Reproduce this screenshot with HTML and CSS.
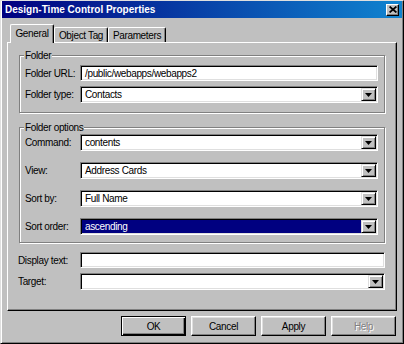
FILE: index.html
```html
<!DOCTYPE html>
<html>
<head>
<meta charset="utf-8">
<link rel="stylesheet" href="styles.css">
</head>
<body>
<div class="window">
  <div class="titlebar">
    <span class="title">Design-Time Control Properties</span>
    <span class="close"><svg width="8" height="7" viewBox="0 0 8 7"><path d="M0.6 0.5 L7.4 6.5 M7.4 0.5 L0.6 6.5" stroke="#000" stroke-width="1.7" fill="none"/></svg></span>
  </div>
  <div class="client">
    <div class="tabs">
      <div class="tab active tab-general">General</div>
      <div class="tab tab-object">Object Tag</div>
      <div class="tab tab-params">Parameters</div>
    </div>
    <div class="panel">
      <div class="group group-folder">
        <span class="legend">Folder</span>
        <div class="row">
          <span class="lbl">Folder URL:</span>
          <div class="field text">/public/webapps/webapps2</div>
        </div>
        <div class="row">
          <span class="lbl">Folder type:</span>
          <div class="field combo"><span class="value">Contacts</span><span class="drop"><svg width="7" height="4" viewBox="0 0 7 4"><path d="M0 0 H7 L3.5 4 Z" fill="#000"/></svg></span></div>
        </div>
      </div>
      <div class="group group-options">
        <span class="legend">Folder options</span>
        <div class="row">
          <span class="lbl">Command:</span>
          <div class="field combo"><span class="value">contents</span><span class="drop"><svg width="7" height="4" viewBox="0 0 7 4"><path d="M0 0 H7 L3.5 4 Z" fill="#000"/></svg></span></div>
        </div>
        <div class="row">
          <span class="lbl">View:</span>
          <div class="field combo"><span class="value">Address Cards</span><span class="drop"><svg width="7" height="4" viewBox="0 0 7 4"><path d="M0 0 H7 L3.5 4 Z" fill="#000"/></svg></span></div>
        </div>
        <div class="row">
          <span class="lbl">Sort by:</span>
          <div class="field combo"><span class="value">Full Name</span><span class="drop"><svg width="7" height="4" viewBox="0 0 7 4"><path d="M0 0 H7 L3.5 4 Z" fill="#000"/></svg></span></div>
        </div>
        <div class="row">
          <span class="lbl">Sort order:</span>
          <div class="field combo"><span class="value selected">ascending</span><span class="drop"><svg width="7" height="4" viewBox="0 0 7 4"><path d="M0 0 H7 L3.5 4 Z" fill="#000"/></svg></span></div>
        </div>
      </div>
      <div class="extra">
        <div class="row">
          <span class="lbl lbl-wide">Display text:</span>
          <div class="field text"></div>
        </div>
        <div class="row">
          <span class="lbl lbl-wide">Target:</span>
          <div class="field combo"><span class="value"></span><span class="drop"><svg width="7" height="4" viewBox="0 0 7 4"><path d="M0 0 H7 L3.5 4 Z" fill="#000"/></svg></span></div>
        </div>
      </div>
    </div>
    <div class="buttons">
      <div class="btn default">OK</div>
      <div class="btn">Cancel</div>
      <div class="btn">Apply</div>
      <div class="btn disabled">Help</div>
    </div>
  </div>
</div>
</body>
</html>
```

FILE: styles.css
```css
* { box-sizing: border-box; }
html, body { margin: 0; padding: 0; }
body {
  width: 404px;
  height: 344px;
  overflow: hidden;
  font-family: "Liberation Sans", Arial, sans-serif;
  font-size: 10px;
  letter-spacing: -0.35px;
  color: #000;
  background: #c0c0c0;
}
.window {
  width: 404px;
  height: 344px;
  background: #c0c0c0;
  border: 1px solid;
  border-color: #dfdfdf #000 #000 #dfdfdf;
  padding: 0 1px 1px 1px;
  box-shadow: inset 1px 0 #fff, inset -1px -1px #808080;
  display: flex;
  flex-direction: column;
}
.titlebar {
  height: 17px;
  flex: none;
  display: flex;
  align-items: center;
  justify-content: space-between;
  padding: 0 3px 0 3px;
  background: linear-gradient(to right, #000080, #1084d0);
}
.title {
  color: #fff;
  font-weight: bold;
  font-size: 10px;
  letter-spacing: 0;
}
.close {
  width: 13px;
  height: 12px;
  background: #c0c0c0;
  border: 1px solid;
  border-color: #fff #000 #000 #fff;
  box-shadow: inset -1px -1px #808080;
  display: flex;
  align-items: center;
  justify-content: center;
}
.close svg { display: block; }
.client {
  flex: 1;
  padding: 6px 5px 0 5px;
  display: flex;
  flex-direction: column;
}
.tabs {
  height: 18px;
  flex: none;
  display: flex;
  align-items: flex-end;
  padding-left: 3px;
  position: relative;
  z-index: 1;
}
.tab {
  height: 15px;
  background: #c0c0c0;
  border: 1px solid;
  border-bottom: none;
  border-color: #fff #000 #000 #fff;
  box-shadow: inset -1px 0 #808080;
  border-radius: 2px 2px 0 0;
  display: flex;
  align-items: center;
  justify-content: center;
  padding-top: 1px;
}
.tab.active {
  height: 19px;
  margin-bottom: -1px;
  padding-top: 0;
  padding-bottom: 1px;
}
.tab-general { width: 44px; }
.tab-object { width: 54px; }
.tab-params { width: 58px; }
.panel {
  height: 269px;
  flex: none;
  border: 1px solid;
  border-color: #fff #000 #000 #fff;
  box-shadow: inset -1px -1px #808080;
  padding: 12px 11px 0 11px;
  display: flex;
  flex-direction: column;
}
.group {
  position: relative;
  border: 1px solid #808080;
  box-shadow: 1px 1px #fff, inset 1px 1px #fff;
  display: flex;
  flex-direction: column;
}
.legend {
  position: absolute;
  top: -6px;
  left: 4px;
  background: #c0c0c0;
  padding: 0 1px;
  line-height: 12px;
}
.group-folder {
  padding: 9px 6px 9px 5px;
  gap: 5px;
}
.group-options {
  margin-top: 14px;
  padding: 6px 6px 7px 5px;
  gap: 11px;
}
.row {
  display: flex;
  align-items: center;
}
.lbl {
  width: 55px;
  flex: none;
  white-space: nowrap;
}
.lbl-wide {
  width: 62px;
  margin-left: -1px;
}
.field {
  flex: 1;
  height: 16px;
  background: #fff;
  border: 1px solid;
  border-color: #808080 #fff #fff #808080;
  box-shadow: inset 1px 1px #000, inset -1px -1px #dfdfdf;
  display: flex;
  align-items: center;
  white-space: nowrap;
  overflow: hidden;
}
.field.text { padding-left: 4px; }
.field.combo {
  height: 17px;
  padding: 1px;
  align-items: stretch;
}
.value {
  flex: 1;
  padding-left: 3px;
  display: flex;
  align-items: center;
}
.value.selected {
  background: #000080;
  color: #fff;
}
.drop {
  width: 15px;
  flex: none;
  background: #c0c0c0;
  border: 1px solid;
  border-color: #dfdfdf #000 #000 #dfdfdf;
  box-shadow: inset 1px 1px #fff, inset -1px -1px #808080;
  display: flex;
  align-items: center;
  justify-content: center;
}
.drop svg { display: block; }
.extra {
  margin-top: 9px;
  display: flex;
  flex-direction: column;
  gap: 5px;
}
.buttons {
  margin-top: 5px;
  display: flex;
  justify-content: flex-end;
  gap: 5px;
  padding-right: 1px;
}
.btn {
  width: 65px;
  height: 20px;
  background: #c0c0c0;
  border: 1px solid;
  border-color: #fff #000 #000 #fff;
  box-shadow: inset -1px -1px #808080, inset 1px 1px #dfdfdf;
  display: flex;
  align-items: center;
  justify-content: center;
}
.btn.default {
  border-color: #000;
  box-shadow: inset 1px 1px #fff, inset -1px -1px #000, inset -2px -2px #808080;
}
.btn.disabled {
  color: #808080;
  text-shadow: 1px 1px #fff;
}
```
